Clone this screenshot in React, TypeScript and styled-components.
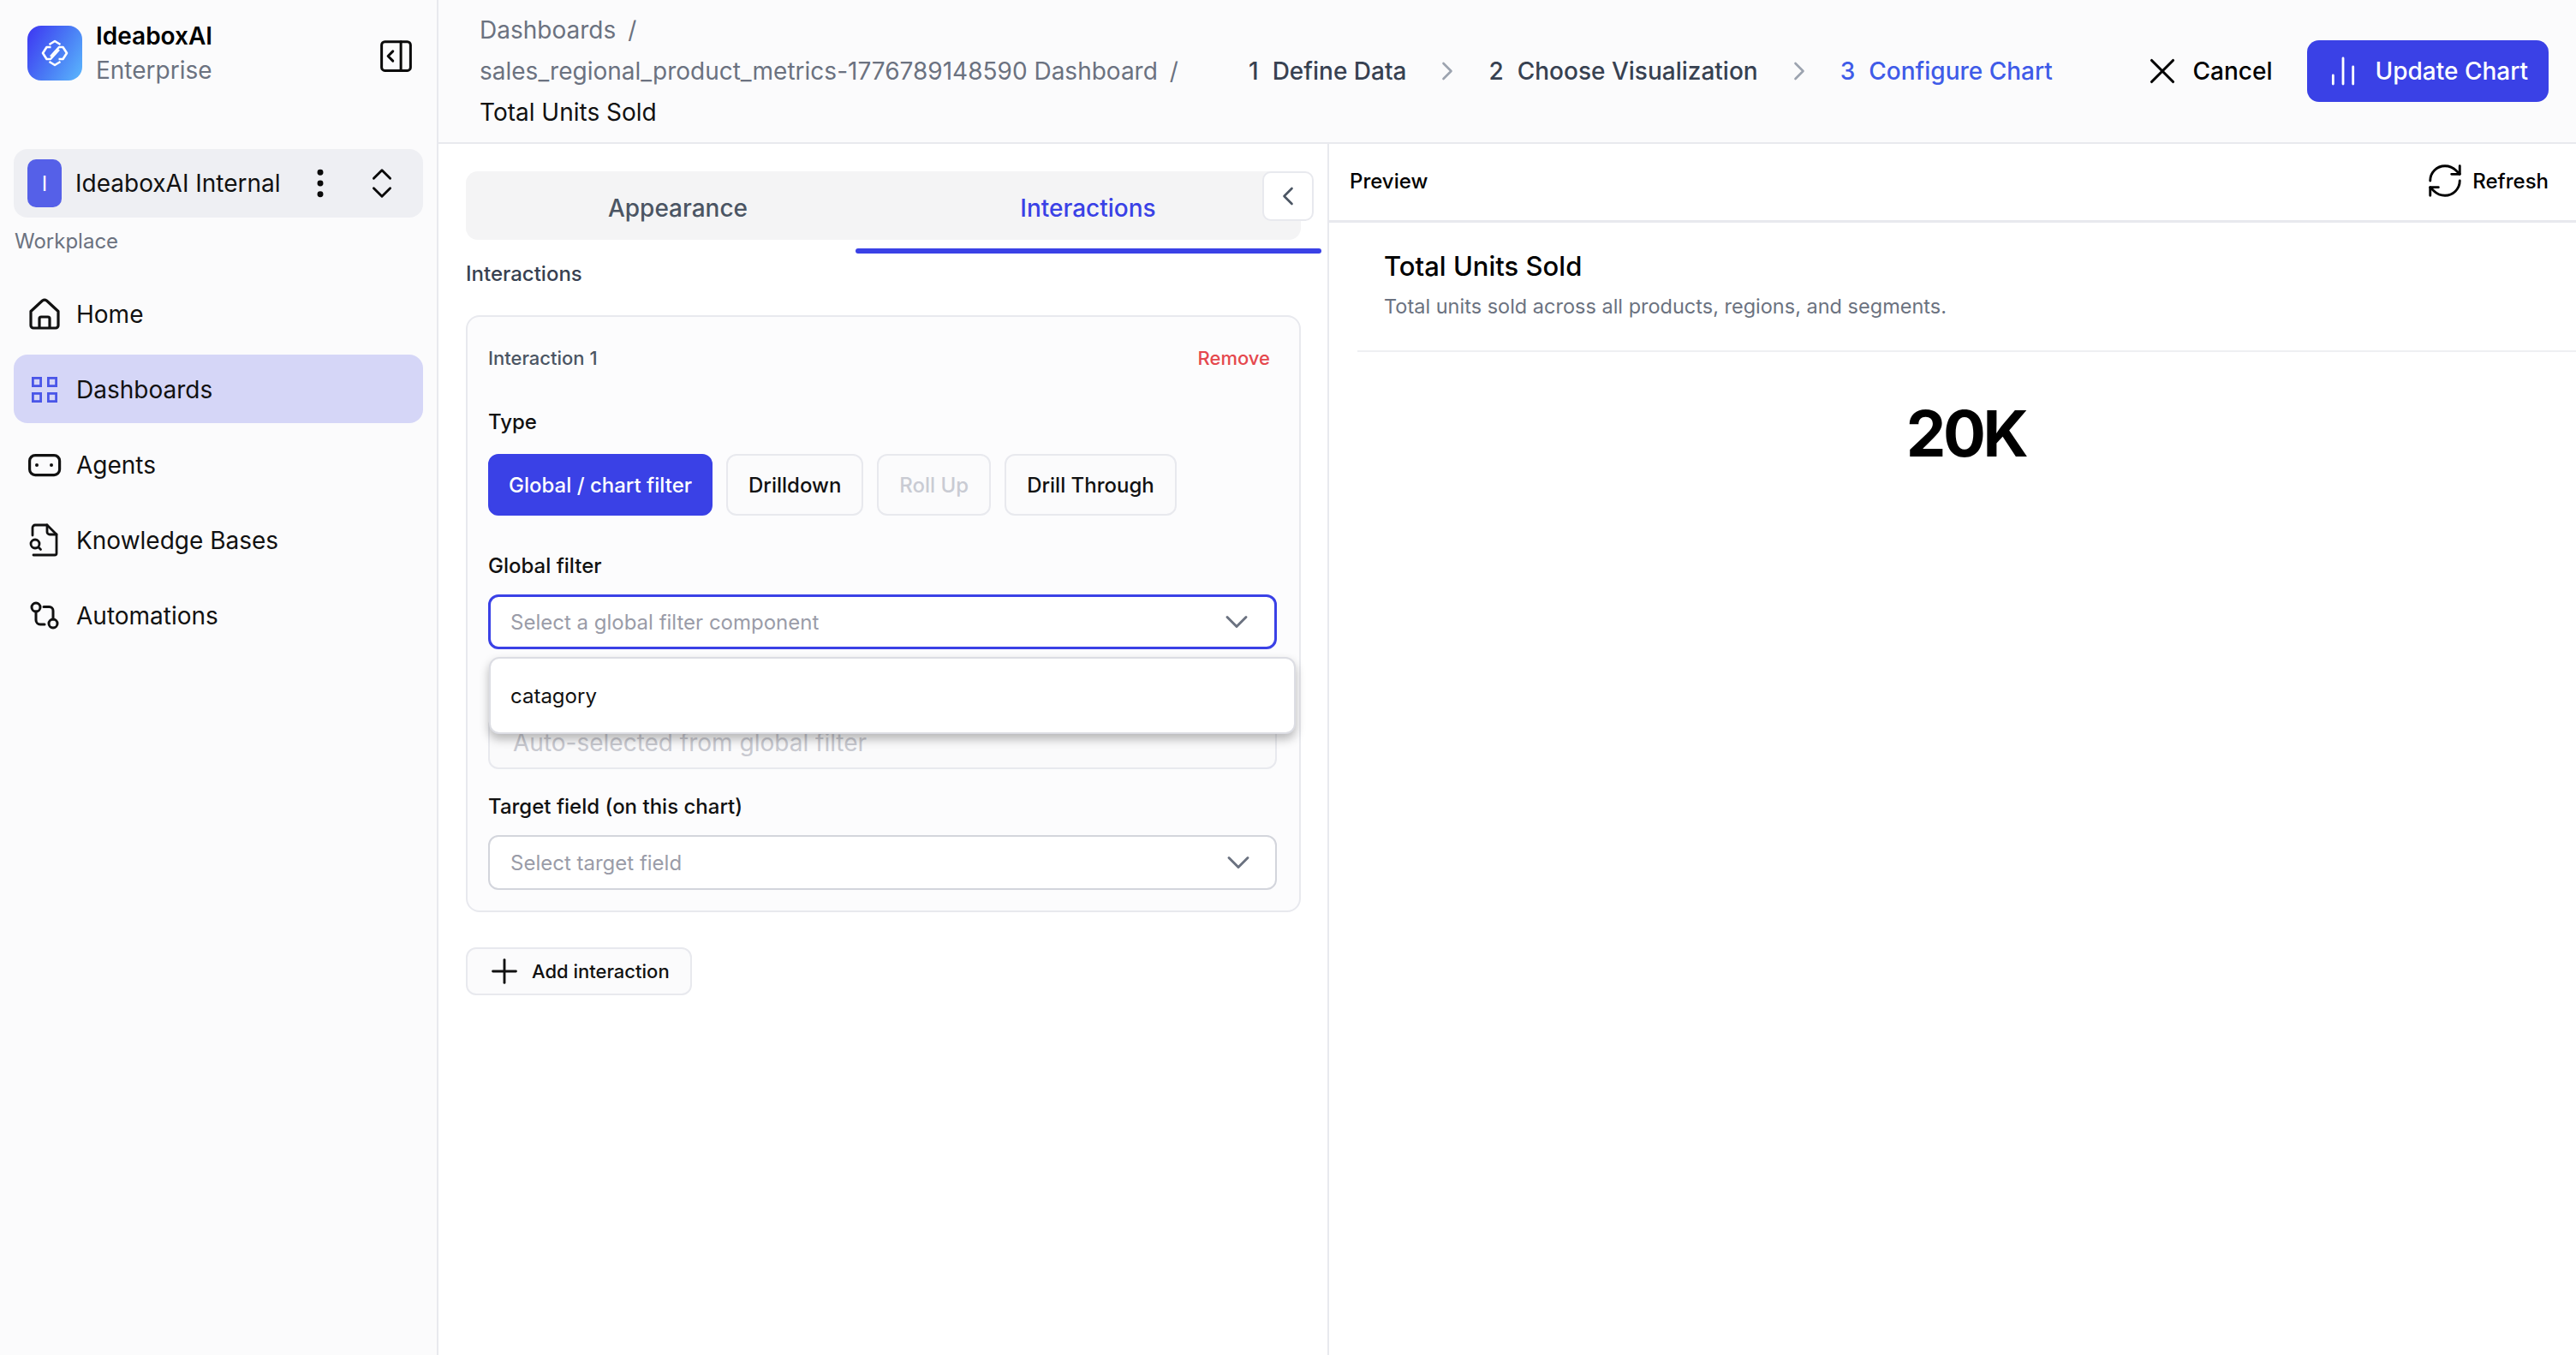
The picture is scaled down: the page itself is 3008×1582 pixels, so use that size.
import styled, { createGlobalStyle } from 'styled-components'
import {
	ChartNoAxesColumn,
	ChevronDown,
	ChevronLeft,
	ChevronRight,
	ChevronsUpDown,
	EllipsisVertical,
	PanelRightOpen,
	Plus,
	RefreshCw,
	X,
} from 'lucide-react'

const primary = '#3a41e6'
const line = '#e8e9ee'
const muted = '#6b7280'

const GlobalStyle = createGlobalStyle`
	html, body {
		margin: 0;
		padding: 0;
		background: #fff;
	}
	* {
		box-sizing: border-box;
	}
	body {
		font-family: Inter, 'Liberation Sans', sans-serif;
		color: #0a0a0a;
	}
`

const LogoMark = () => (
	<LogoBox>
		<svg width="32" height="32" viewBox="0 0 32 32" fill="none" stroke="#fff" strokeWidth="2.6" strokeLinejoin="round">
			<path d="M9.5 6 L16 2 L22.5 6" />
			<path d="M9.5 26 L16 30 L22.5 26" />
			<path d="M11.5 9 H6.5 L2 16 L6.5 23 H11 L21 12" />
			<path d="M20.5 23 H25.5 L30 16 L25.5 9 H21 L11 20" />
		</svg>
	</LogoBox>
)

const HomeIcon = () => (
	<svg width="40" height="40" viewBox="0 0 40 40" fill="none" stroke="currentColor" strokeWidth="3.2" strokeLinejoin="round">
		<path d="M4 16.5 L17.5 4 Q20 2.4 22.5 4 L36 16.5 V33 a3 3 0 0 1 -3 3 H7 a3 3 0 0 1 -3 -3 Z" />
		<path d="M14 36 V25 a2 2 0 0 1 2 -2 h8 a2 2 0 0 1 2 2 V36" />
	</svg>
)

const GridIcon = () => (
	<svg width="40" height="40" viewBox="0 0 40 40" fill="none" stroke="#4a56e8" strokeWidth="2.8">
		<rect x="6.4" y="6.4" width="9.2" height="9.2" />
		<rect x="24.4" y="6.4" width="9.2" height="9.2" />
		<rect x="6.4" y="24.4" width="9.2" height="9.2" />
		<rect x="24.4" y="24.4" width="9.2" height="9.2" />
	</svg>
)

const AgentIcon = () => (
	<svg width="40" height="40" viewBox="0 0 40 40" fill="none" stroke="currentColor" strokeWidth="3.2">
		<rect x="2.6" y="8.6" width="35" height="23" rx="6.5" />
		<circle cx="11" cy="20" r="2" fill="currentColor" stroke="none" />
		<circle cx="28" cy="20" r="2" fill="currentColor" stroke="none" />
	</svg>
)

const KnowledgeIcon = () => (
	<svg width="40" height="40" viewBox="0 0 40 40" fill="none" stroke="currentColor" strokeWidth="2.8" strokeLinecap="round" strokeLinejoin="round">
		<path d="M6 14 V5 a3 3 0 0 1 3 -3 H23 L34 13 V35 a2 2 0 0 1 -2 2 H7" />
		<path d="M23 2 V10 a3 3 0 0 0 3 3 H34" />
		<circle cx="9" cy="24" r="5" />
		<path d="M13 28 L15.5 30.5" />
	</svg>
)

const FlowIcon = () => (
	<svg width="40" height="40" viewBox="0 0 40 40" fill="none" stroke="currentColor" strokeWidth="3" strokeLinecap="round">
		<circle cx="10" cy="10" r="5" />
		<circle cx="30" cy="29" r="5" />
		<path d="M10 15 V25 a5 5 0 0 0 5 5 H20" />
		<path d="M30 24 V14 a4.5 4.5 0 0 0 -4.5 -4.5 H19" />
	</svg>
)

const navItems = [
	{ label: 'Home', icon: <HomeIcon /> },
	{ label: 'Dashboards', icon: <GridIcon />, active: true },
	{ label: 'Agents', icon: <AgentIcon /> },
	{ label: 'Knowledge Bases', icon: <KnowledgeIcon /> },
	{ label: 'Automations', icon: <FlowIcon /> },
]

const App = () => {
	return (
		<Page>
			<GlobalStyle />
			<Sidebar>
				<BrandRow>
					<LogoMark />
					<BrandText>
						<BrandName>IdeaboxAI</BrandName>
						<BrandPlan>Enterprise</BrandPlan>
					</BrandText>
					<ToggleIcon>
						<PanelRightOpen size={45} strokeWidth={1.6} />
					</ToggleIcon>
				</BrandRow>
				<Workspace>
					<WorkspaceAvatar>I</WorkspaceAvatar>
					<WorkspaceName>IdeaboxAI Internal</WorkspaceName>
					<EllipsisVertical size={44} strokeWidth={1.8} />
					<ChevronsUpDown size={46} strokeWidth={1.5} />
				</Workspace>
				<SectionLabel>Workplace</SectionLabel>
				<Nav>
					{navItems.map((item) => (
						<NavItem key={item.label} $active={item.active}>
							{item.icon}
							{item.label}
						</NavItem>
					))}
				</Nav>
			</Sidebar>
			<Main>
				<TopBar>
					<Breadcrumb>
						<Crumb>Dashboards<Slash>/</Slash></Crumb>
						<Crumb>sales_regional_product_metrics-1776789148590 Dashboard<Slash>/</Slash></Crumb>
						<CurrentCrumb>Total Units Sold</CurrentCrumb>
					</Breadcrumb>
					<Steps>
						<Step><span>1</span>Define Data</Step>
						<StepArrow><ChevronRight size={36} strokeWidth={1.75} /></StepArrow>
						<Step><span>2</span>Choose Visualization</Step>
						<StepArrow><ChevronRight size={36} strokeWidth={1.75} /></StepArrow>
						<Step $active><span>3</span>Configure Chart</Step>
					</Steps>
					<Actions>
						<CancelButton>
							<X size={50} strokeWidth={1.5} />
							Cancel
						</CancelButton>
						<UpdateButton>
							<ChartNoAxesColumn size={40} strokeWidth={1.7} />
							Update Chart
						</UpdateButton>
					</Actions>
				</TopBar>
				<Content>
					<ConfigPanel>
						<TabBar>
							<Tab>Appearance</Tab>
							<Tab $active>Interactions</Tab>
							<TabUnderline />
							<CollapseButton>
								<ChevronLeft size={36} strokeWidth={1.75} />
							</CollapseButton>
						</TabBar>
						<PanelHeading>Interactions</PanelHeading>
						<InteractionCard>
							<CardHeader>
								<CardName>Interaction 1</CardName>
								<RemoveLink>Remove</RemoveLink>
							</CardHeader>
							<TypeLabel>Type</TypeLabel>
							<TypeRow>
								<TypeButton $selected>Global / chart filter</TypeButton>
								<TypeButton>Drilldown</TypeButton>
								<TypeButton $disabled>Roll Up</TypeButton>
								<TypeButton>Drill Through</TypeButton>
							</TypeRow>
							<FieldLabel $gap={41}>Global filter</FieldLabel>
							<SelectWrap>
								<SelectBox $focused>
									Select a global filter component
									<ChevronDown size={44} strokeWidth={1.6} />
								</SelectBox>
								<DropdownMenu>catagory</DropdownMenu>
							</SelectWrap>
							<DisabledField>Auto-selected from global filter</DisabledField>
							<FieldLabel $gap={26}>Target field (on this chart)</FieldLabel>
							<SelectBox>
								Select target field
								<ChevronDown size={44} strokeWidth={1.6} />
							</SelectBox>
						</InteractionCard>
						<AddButton>
							<Plus size={46} strokeWidth={1.5} />
							Add interaction
						</AddButton>
					</ConfigPanel>
					<PreviewPanel>
						<PreviewBar>
							<PreviewName>Preview</PreviewName>
							<RefreshButton>
								<RefreshCw size={46} strokeWidth={1.5} />
								Refresh
							</RefreshButton>
						</PreviewBar>
						<ChartHeader>
							<ChartTitle>Total Units Sold</ChartTitle>
							<ChartDescription>Total units sold across all products, regions, and segments.</ChartDescription>
						</ChartHeader>
						<MetricValue>20K</MetricValue>
					</PreviewPanel>
				</Content>
			</Main>
		</Page>
	)
}

export default App

const Page = styled.div`
	display: flex;
	width: 3008px;
	height: 1582px;
	overflow: hidden;
	background: #fff;
`

const Sidebar = styled.aside`
	width: 512px;
	flex-shrink: 0;
	background: #fbfbfc;
	border-right: 2px solid ${line};
	padding: 22px 16px 0;
	display: flex;
	flex-direction: column;
`

const BrandRow = styled.div`
	display: flex;
	align-items: center;
	height: 80px;
	padding-left: 16px;
	margin-bottom: 72px;
`

const LogoBox = styled.div`
	width: 64px;
	height: 64px;
	border-radius: 16px;
	background: linear-gradient(120deg, #3d35f2 0%, #4a7df5 55%, #5bb8fd 100%);
	display: flex;
	align-items: center;
	justify-content: center;
	flex-shrink: 0;
`

const BrandText = styled.div`
	margin-left: 16px;
	flex: 1;
`

const BrandName = styled.div`
	font-size: 28px;
	line-height: 40px;
	font-weight: 600;
	color: #000;
`

const BrandPlan = styled.div`
	font-size: 28px;
	line-height: 40px;
	color: ${muted};
`

const ToggleIcon = styled.div`
	display: flex;
	margin-right: 9px;
	margin-top: 6px;
`

const Workspace = styled.div`
	display: flex;
	align-items: center;
	height: 80px;
	padding-left: 16px;
	border-radius: 16px;
	background: #eeeff3;
	svg:nth-of-type(2) {
		margin-left: 27px;
	}
`

const WorkspaceAvatar = styled.div`
	width: 40px;
	height: 56px;
	border-radius: 10px;
	background: #5560e8;
	color: #fff;
	font-size: 24px;
	display: flex;
	align-items: center;
	justify-content: center;
`

const WorkspaceName = styled.div`
	margin-left: 16px;
	width: 264px;
	font-size: 28px;
	color: #111;
	white-space: nowrap;
`

const SectionLabel = styled.div`
	margin-top: 8px;
	padding-left: 1px;
	font-size: 24px;
	line-height: 40px;
	color: ${muted};
`

const Nav = styled.nav`
	display: flex;
	flex-direction: column;
	gap: 8px;
	margin-top: 24px;
`

const NavItem = styled.a<{ $active?: boolean }>`
	display: flex;
	align-items: center;
	gap: 17px;
	height: 80px;
	padding: 2px 0 0 16px;
	border-radius: 16px;
	font-size: 28px;
	color: #111;
	background: ${(p) => (p.$active ? '#d5d6f7' : 'transparent')};
`

const Main = styled.main`
	flex: 1;
	min-width: 0;
	display: flex;
	flex-direction: column;
`

const TopBar = styled.header`
	display: flex;
	align-items: center;
	height: 168px;
	padding: 0 32px 0 48px;
	background: #fbfbfc;
	border-bottom: 2px solid ${line};
	flex-shrink: 0;
`

const Breadcrumb = styled.div`
	width: 898px;
	flex-shrink: 0;
	font-size: 28px;
	line-height: 48px;
`

const Crumb = styled.div`
	color: ${muted};
	white-space: nowrap;
`

const Slash = styled.span`
	margin-left: 14px;
`

const CurrentCrumb = styled.div`
	color: #111;
`

const Steps = styled.div`
	display: flex;
	align-items: center;
	gap: 30px;
`

const Step = styled.div<{ $active?: boolean }>`
	display: flex;
	gap: 16px;
	font-size: 28px;
	font-weight: 500;
	white-space: nowrap;
	color: ${(p) => (p.$active ? '#3f5be8' : '#374151')};
`

const StepArrow = styled.div`
	display: flex;
	color: #9ca3af;
`

const Actions = styled.div`
	display: flex;
	align-items: center;
	margin-left: auto;
	gap: 41px;
`

const CancelButton = styled.div`
	display: flex;
	align-items: center;
	font-size: 28px;
	font-weight: 500;
	color: #000;
	svg {
		margin: 0 11px 0 -12px;
	}
`

const UpdateButton = styled.div`
	display: flex;
	align-items: center;
	height: 72px;
	padding: 0 24px 0 22px;
	border-radius: 14px;
	background: ${primary};
	color: #fff;
	font-size: 28px;
	font-weight: 500;
	svg {
		margin-right: 17px;
	}
`

const Content = styled.div`
	flex: 1;
	display: flex;
	min-height: 0;
`

const ConfigPanel = styled.section`
	width: 1040px;
	flex-shrink: 0;
	border-right: 2px solid ${line};
	padding: 32px 31px 0 32px;
`

const TabBar = styled.div`
	position: relative;
	display: grid;
	grid-template-columns: 495px 1fr;
	height: 80px;
	border-radius: 14px;
	background: #f4f4f5;
`

const Tab = styled.div<{ $active?: boolean }>`
	display: flex;
	align-items: center;
	justify-content: center;
	padding-top: 6px;
	padding-right: ${(p) => (p.$active ? '17px' : '0')};
	font-size: 28px;
	font-weight: 500;
	color: ${(p) => (p.$active ? primary : '#4b5563')};
`

const TabUnderline = styled.div`
	position: absolute;
	left: 455px;
	right: -24px;
	bottom: -16px;
	height: 6px;
	border-radius: 3px;
	background: ${primary};
`

const CollapseButton = styled.div`
	position: absolute;
	top: 0;
	right: -15px;
	width: 60px;
	height: 58px;
	display: flex;
	align-items: center;
	justify-content: center;
	border-radius: 10px;
	background: #fff;
	border: 2px solid ${line};
	color: #4b5563;
`

const PanelHeading = styled.div`
	margin-top: 22px;
	font-size: 24px;
	line-height: 36px;
	font-weight: 500;
	color: #374151;
`

const InteractionCard = styled.div`
	margin-top: 30px;
	padding: 30px 26px 24px 24px;
	border: 2px solid ${line};
	border-radius: 16px;
	background: #fcfcfd;
`

const CardHeader = styled.div`
	display: flex;
	align-items: center;
	justify-content: space-between;
	height: 36px;
	padding-right: 8px;
`

const CardName = styled.div`
	font-size: 22px;
	font-weight: 500;
	color: #4b5563;
`

const RemoveLink = styled.div`
	font-size: 22px;
	font-weight: 500;
	color: #e5484d;
`

const FieldLabel = styled.div<{ $gap: number }>`
	margin: ${(p) => p.$gap}px 0 15px;
	font-size: 24px;
	line-height: 36px;
	font-weight: 500;
	color: #111;
`

const TypeLabel = styled(FieldLabel).attrs({ $gap: 39 })`
	margin-bottom: 19px;
`

const TypeRow = styled.div`
	display: flex;
	gap: 16px;
`

const TypeButton = styled.div<{ $selected?: boolean; $disabled?: boolean }>`
	display: flex;
	align-items: center;
	height: 72px;
	padding: 0 ${(p) => (p.$selected ? '22px' : '24px')};
	border-radius: 12px;
	font-size: 24px;
	font-weight: 500;
	border: 2px solid ${(p) => (p.$selected ? primary : line)};
	background: ${(p) => (p.$selected ? primary : '#fbfbfc')};
	color: ${(p) => (p.$selected ? '#fff' : p.$disabled ? '#c9cbd3' : '#111')};
`

const SelectWrap = styled.div`
	position: relative;
`

const SelectBox = styled.div<{ $focused?: boolean }>`
	display: flex;
	align-items: center;
	justify-content: space-between;
	height: 64px;
	padding: 0 ${(p) => (p.$focused ? '22px' : '21px')} 0 ${(p) => (p.$focused ? '23px' : '24px')};
	border-radius: 12px;
	font-size: 24px;
	color: #9a9ca8;
	background: #fff;
	border: ${(p) => (p.$focused ? `3px solid ${primary}` : '2px solid #d3d5dc')};
	svg {
		color: ${muted};
	}
`

const DropdownMenu = styled.div`
	position: absolute;
	top: 73px;
	left: 1px;
	width: 942px;
	height: 90px;
	z-index: 5;
	display: flex;
	align-items: center;
	padding-left: 23px;
	border-radius: 12px;
	background: #fff;
	border: 2px solid #dcdde3;
	box-shadow: 0 6px 12px rgba(0, 0, 0, 0.28);
	font-size: 24px;
	color: #111;
`

const DisabledField = styled.div`
	display: flex;
	align-items: center;
	height: 63px;
	margin-top: 77px;
	padding-left: 27px;
	border: 2px solid ${line};
	border-radius: 12px;
	background: #fafafb;
	font-size: 28px;
	color: #c8c9d0;
`

const AddButton = styled.div`
	display: inline-flex;
	align-items: center;
	height: 56px;
	margin-top: 41px;
	padding: 0 24px 0 20px;
	border: 2px solid ${line};
	border-radius: 12px;
	background: #fbfbfc;
	font-size: 22px;
	font-weight: 500;
	color: #111;
	svg {
		margin-right: 9px;
	}
`

const PreviewPanel = styled.section`
	flex: 1;
	min-width: 0;
`

const PreviewBar = styled.div`
	display: flex;
	align-items: center;
	justify-content: space-between;
	height: 92px;
	padding: 0 32px 3px 24px;
	border-bottom: 3px solid ${line};
`

const PreviewName = styled.div`
	font-size: 24px;
	font-weight: 500;
	color: #000;
`

const RefreshButton = styled.div`
	display: flex;
	align-items: center;
	font-size: 24px;
	font-weight: 500;
	color: #000;
	svg {
		margin-right: 9px;
	}
`

const ChartHeader = styled.div`
	margin-left: 33px;
	padding: 29px 31px 33px;
	border-bottom: 2px solid #eeeff2;
`

const ChartTitle = styled.div`
	font-size: 31px;
	line-height: 44px;
	font-weight: 500;
	color: #000;
`

const ChartDescription = styled.div`
	margin-top: 7px;
	font-size: 23.5px;
	line-height: 36px;
	color: ${muted};
`

const MetricValue = styled.div`
	margin-top: 50px;
	padding-left: 31px;
	text-align: center;
	font-size: 74px;
	line-height: 90px;
	font-weight: 700;
	letter-spacing: -0.045em;
	color: #000;
`
